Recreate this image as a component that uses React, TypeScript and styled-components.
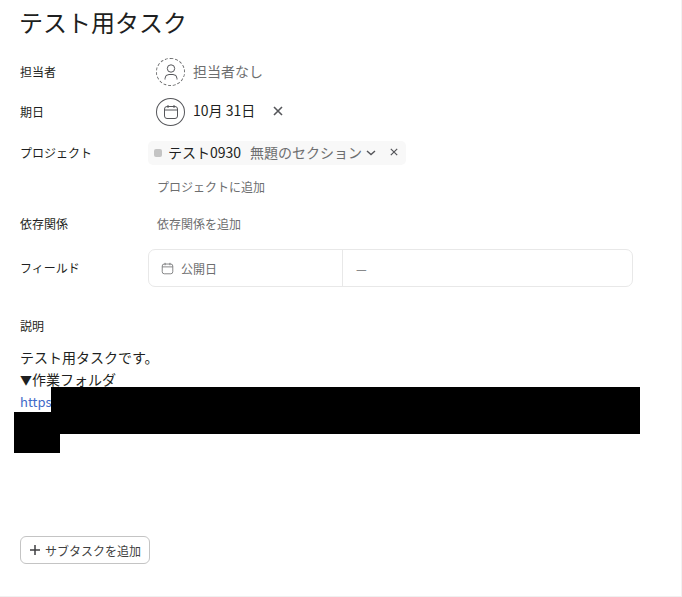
import React from "react";
import styled, { createGlobalStyle } from "styled-components";

const Global = createGlobalStyle`
  html, body { margin: 0; padding: 0; background: #fff; }
  body { font-family: "Noto Sans CJK JP", "Noto Sans", sans-serif; color: #1e1f21; }
`;

const Page = styled.div`
  position: relative;
  box-sizing: border-box;
  width: 682px;
  height: 597px;
  padding: 0 20px;
  border-right: 1px solid #f2f2f2;
  border-bottom: 1px solid #f0f0f0;
  overflow: hidden;
`;
const Title = styled.h1`
  margin: 0 0 0 -1px;
  height: 44px;
  font-size: 24px;
  font-weight: 400;
  line-height: 44px;
`;
const Row = styled.div<{ $h: number; $mt?: number }>`
  display: grid;
  grid-template-columns: 128px 1fr;
  align-items: center;
  height: ${(p) => p.$h}px;
  margin-top: ${(p) => p.$mt ?? 0}px;
`;
const Label = styled.div`
  font-size: 12px;
  line-height: 18px;
  color: #1e1f21;
`;
const Value = styled.div`
  display: flex;
  align-items: center;
  padding-left: 8px;
  font-size: 14px;
`;
const CircleIcon = styled.div<{ $dashed?: boolean }>`
  box-sizing: border-box;
  width: 29px;
  height: 28px;
  border-radius: 50%;
  border: 1px ${(p) => (p.$dashed ? "dashed #6d6e6f" : "solid #55565a")};
  display: flex;
  align-items: center;
  justify-content: center;
  margin-right: 8px;
  color: #55565a;
`;
const Muted = styled.span`
  font-size: 14px;
  color: #6d6e6f;
  padding-bottom: 2px;
`;
const DateText = styled.span`
  font-size: 14px;
  color: #1e1f21;
  padding-bottom: 3px;
`;
const CloseBtn = styled.span<{ $ml: number }>`
  display: inline-flex;
  margin-left: ${(p) => p.$ml}px;
  padding-bottom: 2px;
  color: #55565a;
`;
const Chip = styled.div`
  display: flex;
  align-items: center;
  height: 24px;
  width: 258px;
  box-sizing: border-box;
  padding-left: 6px;
  background: #f8f8f8;
  border-radius: 5px;
  font-size: 14px;
`;
const Dot = styled.span`
  width: 8px;
  height: 8px;
  border-radius: 2px;
  background: #c4c4c4;
  margin-right: 6px;
`;
const ChipName = styled.span`
  color: #1e1f21;
  margin-right: 9px;
  padding-bottom: 2px;
`;
const Chevron = styled.span`
  display: inline-flex;
  margin-left: 4px;
  color: #55565a;
`;
const AddLink = styled.span`
  margin-left: 1px;
  padding-bottom: 2px;
  font-size: 12px;
  color: #6d6e6f;
`;
const FieldBox = styled.div`
  display: grid;
  grid-template-columns: 194px 1fr;
  box-sizing: border-box;
  width: 485px;
  height: 38px;
  border: 1px solid #e8e8e8;
  border-radius: 7px;
`;
const FieldName = styled.div`
  display: flex;
  align-items: center;
  gap: 7px;
  padding-left: 12px;
  border-right: 1px solid #e8e8e8;
  font-size: 12px;
  color: #6d6e6f;
`;
const FieldValue = styled.div`
  display: flex;
  align-items: center;
  padding-left: 13px;
  font-size: 12px;
  color: #6d6e6f;
`;
const DescLabel = styled.div`
  margin-top: 30px;
  height: 18px;
  font-size: 12px;
  line-height: 18px;
`;
const Description = styled.div`
  margin-top: 11px;
  font-size: 14px;
  line-height: 22px;
  color: #1e1f21;
`;
const Marker = styled.span`
  font-size: 12px;
`;
const DescLink = styled.span`
  color: #3f6ac8;
  font-size: 13px;
  vertical-align: 1px;
`;
const Redaction = styled.div<{ $x: number; $y: number; $w: number; $h: number }>`
  position: absolute;
  left: ${(p) => p.$x}px;
  top: ${(p) => p.$y}px;
  width: ${(p) => p.$w}px;
  height: ${(p) => p.$h}px;
  background: #000;
`;
const SubtaskButton = styled.button`
  position: absolute;
  left: 20px;
  top: 536px;
  box-sizing: border-box;
  width: 130px;
  height: 28px;
  display: flex;
  align-items: center;
  gap: 4px;
  padding: 0 0 0 8px;
  background: #fff;
  border: 1px solid #c4c4c4;
  border-radius: 6px;
  font-family: inherit;
  font-size: 12px;
  color: #3f3f41;
`;

const CalendarIcon = ({ size }: { size: number }) => (
  <svg width={size} height={size} viewBox="0 0 16 16" fill="none" stroke="currentColor" strokeWidth="1">
    <rect x="1.5" y="2.5" width="13" height="12" rx="2.5" />
    <path d="M1.5 6h13M5 1v3M11 1v3" />
  </svg>
);
const PersonIcon = () => (
  <svg width="14" height="16" viewBox="0 0 14 16" fill="none" stroke="currentColor" strokeWidth="1">
    <circle cx="7" cy="4.5" r="3.7" />
    <path d="M1 15.5v-1a4 4 0 0 1 4-4h4a4 4 0 0 1 4 4v1" />
  </svg>
);
const XIcon = ({ size, w }: { size: number; w: number }) => (
  <svg width={size} height={size} viewBox="0 0 10 10" fill="none" stroke="currentColor" strokeWidth={w}>
    <path d="M1 1l8 8M9 1l-8 8" />
  </svg>
);

export default function App() {
  return (
    <Page>
      <Global />
      <Title>テスト用タスク</Title>
      <Row $h={29} $mt={13}>
        <Label>担当者</Label>
        <Value>
          <CircleIcon $dashed>
            <PersonIcon />
          </CircleIcon>
          <Muted>担当者なし</Muted>
        </Value>
      </Row>
      <Row $h={29} $mt={11}>
        <Label>期日</Label>
        <Value>
          <CircleIcon>
            <CalendarIcon size={16} />
          </CircleIcon>
          <DateText>10月 31日</DateText>
          <CloseBtn $ml={18}>
            <XIcon size={10} w={1.6} />
          </CloseBtn>
        </Value>
      </Row>
      <Row $h={24} $mt={15}>
        <Label>プロジェクト</Label>
        <Chip>
          <Dot />
          <ChipName>テスト0930</ChipName>
          <Muted>無題のセクション</Muted>
          <Chevron>
            <svg width="10" height="6" viewBox="0 0 10 6" fill="none" stroke="currentColor" strokeWidth="1.4">
              <path d="M1 1l4 3.6L9 1" />
            </svg>
          </Chevron>
          <CloseBtn $ml={14}>
            <XIcon size={8} w={1.5} />
          </CloseBtn>
        </Chip>
      </Row>
      <Row $h={24} $mt={10}>
        <div />
        <Value>
          <AddLink>プロジェクトに追加</AddLink>
        </Value>
      </Row>
      <Row $h={24} $mt={13}>
        <Label>依存関係</Label>
        <Value>
          <AddLink>依存関係を追加</AddLink>
        </Value>
      </Row>
      <Row $h={38} $mt={13}>
        <Label>フィールド</Label>
        <FieldBox>
          <FieldName>
            <CalendarIcon size={13} />
            <span>公開日</span>
          </FieldName>
          <FieldValue>—</FieldValue>
        </FieldBox>
      </Row>
      <DescLabel>説明</DescLabel>
      <Description>
        テスト用タスクです。
        <br />
        <Marker>▼</Marker>作業フォルダ
        <br />
        <DescLink>https</DescLink>
      </Description>
      <Redaction $x={51} $y={387} $w={589} $h={47} />
      <Redaction $x={14} $y={412} $w={46} $h={41} />
      <SubtaskButton>
        <svg width="12" height="12" viewBox="0 0 12 12" fill="none" stroke="currentColor" strokeWidth="1.5">
          <path d="M6 1v10M1 6h10" />
        </svg>
        サブタスクを追加
      </SubtaskButton>
    </Page>
  );
}
